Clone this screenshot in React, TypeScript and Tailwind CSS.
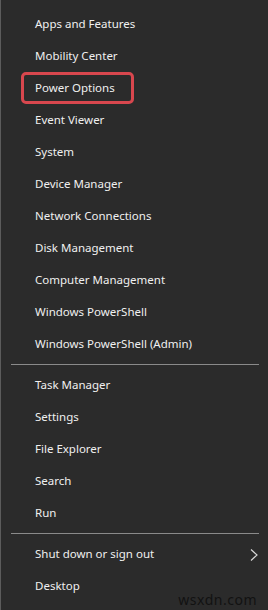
import React from 'react';

const groupA = [
  'Apps and Features',
  'Mobility Center',
  'Power Options',
  'Event Viewer',
  'System',
  'Device Manager',
  'Network Connections',
  'Disk Management',
  'Computer Management',
  'Windows PowerShell',
  'Windows PowerShell (Admin)',
];

const groupB = ['Task Manager', 'Settings', 'File Explorer', 'Search', 'Run'];

const Item: React.FC<{ label: string; highlight?: boolean; submenu?: boolean }> = ({
  label,
  highlight = false,
  submenu = false,
}) => (
  <div className="relative flex h-8 items-center pl-[34px] pr-[9px]">
    {highlight && (
      <div className="absolute left-[20px] top-0 h-8 w-[113px] rounded-[5px] border-[3px] border-[#d8474e]" />
    )}
    <span className="flex-1 text-[11.5px] text-[#f0f0f0]">{label}</span>
    {submenu && (
      <svg width="10" height="14" viewBox="0 0 10 14" className="mt-[1px]">
        <path d="M2 1.5 L8 7 L2 12.5" fill="none" stroke="#d8d8d8" strokeWidth="1.2" />
      </svg>
    )}
  </div>
);

const Separator = () => (
  <div className="py-[4px] pl-[10px] pr-[9px]">
    <div className="h-px bg-[#8a8a8a]" />
  </div>
);

export default function App() {
  return (
    <div
      className="relative flex h-[610px] w-[268px] flex-col border-l border-[#5c5c5c] bg-[#2b2b2b] pt-2"
      style={{ fontFamily: '"Noto Sans", "Open Sans", sans-serif' }}
    >
      {groupA.map((l) => (
        <Item key={l} label={l} highlight={l === 'Power Options'} />
      ))}
      <Separator />
      {groupB.map((l) => (
        <Item key={l} label={l} />
      ))}
      <Separator />
      <Item label="Shut down or sign out" submenu />
      <Item label="Desktop" />
      <span className="absolute bottom-[2px] right-[11px] text-[14px] leading-[16px] tracking-[0.5px] text-[#121212]">
        wsxdn.com
      </span>
    </div>
  );
}
